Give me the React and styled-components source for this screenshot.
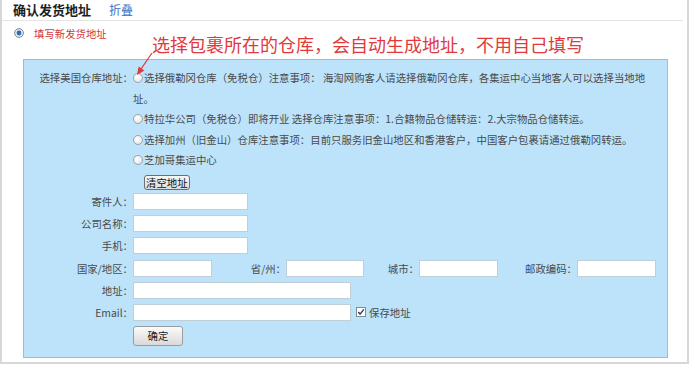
import React from "react";
import styled, { createGlobalStyle } from "styled-components";

const GlobalStyle = createGlobalStyle`
  * { box-sizing: border-box; }
  body { margin: 0; background: #fff; font-family: "Noto Sans CJK SC", "Noto Sans", sans-serif; }
`;

const Frame = styled.div`
  position: relative;
  width: 689px;
  height: 364px;
  border: 2px solid #d7d7d7;
  border-top: none;
`;

const Header = styled.div`
  display: flex;
  align-items: center;
  gap: 18px;
  height: 21px;
  margin-right: 4px;
  padding-left: 11px;
  border-bottom: 1px solid #e4e4e4;
`;

const Title = styled.span`
  font-size: 13px;
  font-weight: 700;
  color: #1e1e1e;
  line-height: 20px;
`;

const Fold = styled.a`
  font-size: 12px;
  color: #3b70c2;
  line-height: 20px;
  text-decoration: none;
`;

const NewRow = styled.div`
  display: flex;
  align-items: center;
  gap: 10px;
  height: 20px;
  margin-top: 2px;
  padding-left: 12px;
  font-size: 10.4px;
  color: #d2383a;
`;

const Annotation = styled.div`
  position: absolute;
  left: 150px;
  top: 33px;
  font-size: 18px;
  line-height: 22px;
  color: #e03a3d;
  white-space: nowrap;
`;

const Arrow = styled.svg`
  position: absolute;
  left: 130px;
  top: 50px;
`;

const Panel = styled.div`
  display: flex;
  flex-direction: column;
  width: 645px;
  margin: 16px 0 0 21px;
  padding: 8px 0 11px 0;
  border: 1px solid #8fc2dc;
  background: #bde3fa;
  font-size: 10.4px;
  color: #4a4a4a;
`;

const Row = styled.div`
  display: flex;
  align-items: ${(p) => (p.$top ? "flex-start" : "center")};
  margin-top: ${(p) => p.$mt || 0}px;
`;

const Label = styled.div`
  width: 109px;
  flex-shrink: 0;
  text-align: right;
  line-height: ${(p) => p.$lh || 17}px;
  white-space: nowrap;
`;

const SubLabel = styled.div`
  width: ${(p) => p.$w}px;
  flex-shrink: 0;
  text-align: right;
  line-height: 17px;
  white-space: nowrap;
`;

const Options = styled.div`
  width: 515px;
  line-height: 20.5px;
`;

const Option = styled.div``;

const RadioDot = styled.span`
  display: inline-block;
  width: 10px;
  height: 10px;
  margin-right: 1px;
  vertical-align: -1px;
  border-radius: 50%;
  border: 1px solid #9aa3aa;
  background: radial-gradient(circle at 40% 35%, #ffffff 0%, #f2f2f2 45%, #d6d9dc 100%);
`;

const Input = styled.input`
  width: ${(p) => p.$w}px;
  height: 17px;
  flex-shrink: 0;
  margin: 0;
  padding: 0 3px;
  border: 1px solid #c0ced8;
  background: #fff;
  font-size: 10.4px;
  outline: none;
`;

const ClearButton = styled.button`
  height: 15px;
  margin: 0 0 0 11px;
  padding: 0 1px;
  border: 1px solid #6e6e6e;
  border-radius: 3px;
  background: linear-gradient(#f7f7f7, #dcdcdc);
  font-family: inherit;
  font-size: 10.4px;
  line-height: 13px;
  color: #111;
`;

const SubmitButton = styled.button`
  width: 50px;
  height: 20px;
  margin: 0;
  padding: 0;
  border: 1px solid #9c9c9c;
  border-radius: 3px;
  background: linear-gradient(#fbfbfb, #d9d9d9);
  font-family: inherit;
  font-size: 10.4px;
  line-height: 18px;
  color: #222;
`;

const Save = styled.label`
  display: flex;
  align-items: center;
  gap: 3px;
  margin-left: 5px;
  line-height: 17px;
`;

function CheckedRadio() {
  return (
    <svg width="10" height="10" viewBox="0 0 10 10">
      <circle cx="5" cy="5" r="4.4" fill="#e4e9ee" stroke="#7c8896" strokeWidth="1" />
      <circle cx="5" cy="5" r="2.4" fill="#2f6db3" />
    </svg>
  );
}

function CheckBox() {
  return (
    <svg width="10" height="10" viewBox="0 0 10 10">
      <rect x="0.5" y="0.5" width="9" height="9" fill="#fff" stroke="#858a90" />
      <path d="M2.3 5 L4.1 7.2 L7.8 2.4" fill="none" stroke="#1f3f66" strokeWidth="1.4" />
    </svg>
  );
}

const warehouses = [
  "选择俄勒冈仓库（免税仓）注意事项： 海淘网购客人请选择俄勒冈仓库，各集运中心当地客人可以选择当地地址。",
  "特拉华公司（免税仓）即将开业 选择仓库注意事项：1.合籍物品仓储转运：2.大宗物品仓储转运。",
  "选择加州（旧金山）仓库注意事项：目前只服务旧金山地区和香港客户，中国客户包裹请通过俄勒冈转运。",
  "芝加哥集运中心",
];

export default function App() {
  return (
    <>
      <GlobalStyle />
      <Frame>
        <Header>
          <Title>确认发货地址</Title>
          <Fold href="#">折叠</Fold>
        </Header>

        <NewRow>
          <CheckedRadio />
          <span>填写新发货地址</span>
        </NewRow>

        <Annotation>选择包裹所在的仓库，会自动生成地址，不用自己填写</Annotation>
        <Arrow width="24" height="28" viewBox="0 0 24 28">
          <line x1="20" y1="3" x2="8" y2="20.5" stroke="#e03a3d" strokeWidth="1.3" />
          <polygon points="5,25 12.4,20.4 6.6,16.4" fill="#e03a3d" />
        </Arrow>

        <Panel>
          <Row $top>
            <Label $lh={20.5}>选择美国仓库地址：</Label>
            <Options>
              {warehouses.map((w) => (
                <Option key={w}>
                  <RadioDot />
                  {w}
                </Option>
              ))}
            </Options>
          </Row>

          <Row $mt={4.5}>
            <Label />
            <ClearButton>清空地址</ClearButton>
          </Row>

          <Row $mt={3}>
            <Label>寄件人：</Label>
            <Input $w={115} />
          </Row>
          <Row $mt={5.2}>
            <Label>公司名称：</Label>
            <Input $w={115} />
          </Row>
          <Row $mt={5.2}>
            <Label>手机：</Label>
            <Input $w={115} />
          </Row>
          <Row $mt={5.2}>
            <Label>国家/地区：</Label>
            <Input $w={79} />
            <SubLabel $w={74}>省/州：</SubLabel>
            <Input $w={78} />
            <SubLabel $w={55}>城市：</SubLabel>
            <Input $w={79} />
            <SubLabel $w={79}>邮政编码：</SubLabel>
            <Input $w={79} />
          </Row>
          <Row $mt={5.2}>
            <Label>地址：</Label>
            <Input $w={218} />
          </Row>
          <Row $mt={5.2}>
            <Label>Email：</Label>
            <Input $w={218} />
            <Save>
              <CheckBox />
              保存地址
            </Save>
          </Row>

          <Row $mt={5}>
            <Label />
            <SubmitButton>确定</SubmitButton>
          </Row>
        </Panel>
      </Frame>
    </>
  );
}
